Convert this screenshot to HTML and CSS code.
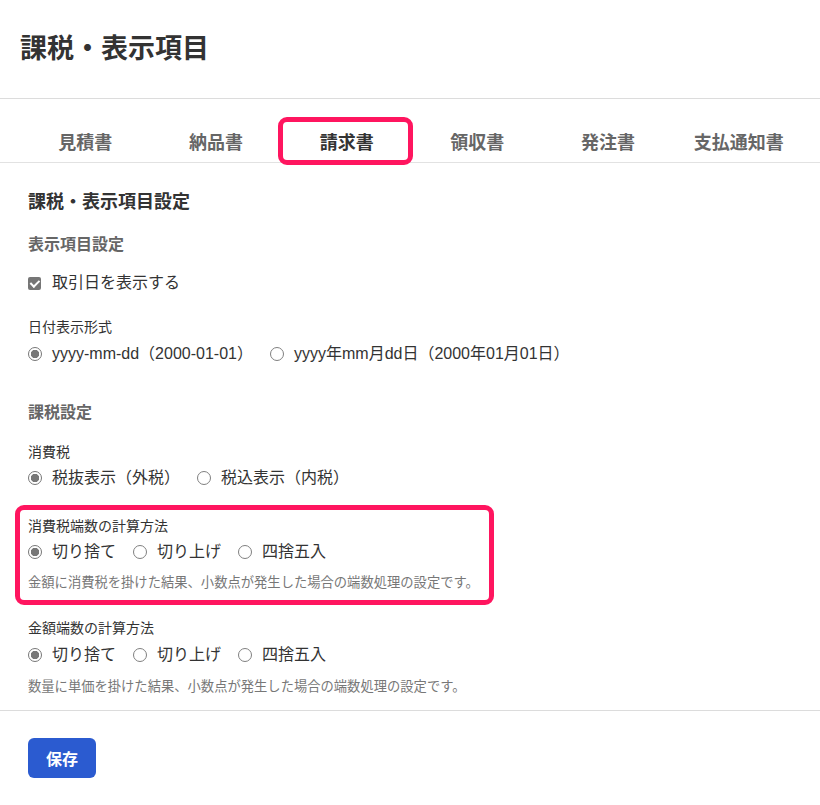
FILE: index.html
```html
<!DOCTYPE html>
<html lang="ja">
<head>
<meta charset="utf-8">
<title>課税・表示項目</title>
<link rel="stylesheet" href="styles.css">
</head>
<body>
<header class="page-header">
  <h1 class="page-title">課税・表示項目</h1>
</header>
<nav class="tabs">
  <div class="tab">見積書</div>
  <div class="tab">納品書</div>
  <div class="tab active">請求書</div>
  <div class="tab">領収書</div>
  <div class="tab">発注書</div>
  <div class="tab">支払通知書</div>
</nav>
<main class="content">
  <h2 class="section-title">課税・表示項目設定</h2>

  <h3 class="group-title">表示項目設定</h3>
  <label class="check-row"><input type="checkbox" checked>取引日を表示する</label>

  <div class="field field-date">
    <div class="field-label">日付表示形式</div>
    <div class="options">
      <label class="option"><input type="radio" name="date" checked>yyyy-mm-dd（2000-01-01）</label>
      <label class="option"><input type="radio" name="date">yyyy年mm月dd日（2000年01月01日）</label>
    </div>
  </div>

  <h3 class="group-title group-tax">課税設定</h3>

  <div class="field field-tax">
    <div class="field-label">消費税</div>
    <div class="options">
      <label class="option"><input type="radio" name="tax" checked>税抜表示（外税）</label>
      <label class="option"><input type="radio" name="tax">税込表示（内税）</label>
    </div>
  </div>

  <div class="field field-rounding annotated">
    <div class="field-label">消費税端数の計算方法</div>
    <div class="options">
      <label class="option"><input type="radio" name="taxround" checked>切り捨て</label>
      <label class="option"><input type="radio" name="taxround">切り上げ</label>
      <label class="option"><input type="radio" name="taxround">四捨五入</label>
    </div>
    <p class="desc">金額に消費税を掛けた結果、小数点が発生した場合の端数処理の設定です。</p>
  </div>

  <div class="field field-amount">
    <div class="field-label">金額端数の計算方法</div>
    <div class="options">
      <label class="option"><input type="radio" name="amountround" checked>切り捨て</label>
      <label class="option"><input type="radio" name="amountround">切り上げ</label>
      <label class="option"><input type="radio" name="amountround">四捨五入</label>
    </div>
    <p class="desc">数量に単価を掛けた結果、小数点が発生した場合の端数処理の設定です。</p>
  </div>
</main>
<footer class="footer">
  <button class="btn-save" type="button">保存</button>
</footer>
</body>
</html>
```

FILE: styles.css
```css
* {
  box-sizing: border-box;
}

body {
  margin: 0;
  background: #ffffff;
  color: #333333;
  font-family: "Liberation Sans", "Noto Sans CJK JP", sans-serif;
}

.page-header {
  height: 99px;
  display: flex;
  align-items: center;
  padding: 0 20px;
  border-bottom: 1px solid #dcdcdc;
}

.page-title {
  margin: 0;
  font-size: 27px;
  line-height: 1;
  font-weight: 700;
  color: #333333;
}

.tabs {
  display: grid;
  grid-template-columns: repeat(6, 1fr);
  padding: 19px 16px 0 20px;
  border-bottom: 1px solid #e2e2e2;
}

.tab {
  position: relative;
  height: 44px;
  display: flex;
  align-items: flex-end;
  justify-content: center;
  padding-bottom: 10px;
  font-size: 18px;
  line-height: 18px;
  font-weight: 700;
  color: #666666;
}

.tab.active {
  color: #333333;
}

.tab.active::after {
  content: "";
  position: absolute;
  top: -1px;
  left: -3px;
  right: -1px;
  bottom: -3px;
  border: 5px solid #ff155f;
  border-radius: 9px;
}

.content {
  padding: 0 28px 13px;
}

.section-title {
  margin: 27px 0 0;
  font-size: 18px;
  line-height: 24px;
  font-weight: 700;
  color: #333333;
}

.group-title {
  margin: 20px 0 0;
  font-size: 16px;
  line-height: 22px;
  font-weight: 700;
  color: #666666;
}

.group-tax {
  margin-top: 36px;
}

.check-row {
  margin-top: 15px;
  height: 24px;
  display: flex;
  align-items: center;
  gap: 11px;
  font-size: 16px;
  line-height: 24px;
  color: #333333;
}

input[type="checkbox"],
input[type="radio"] {
  appearance: none;
  -webkit-appearance: none;
  margin: 0;
  flex: none;
  background: #ffffff;
}

input[type="radio"] {
  width: 14px;
  height: 14px;
  border: 1.5px solid #808080;
  border-radius: 50%;
}

input[type="radio"]:checked {
  border: 1.5px solid #777777;
  background: radial-gradient(circle, #777777 0, #777777 3.9px, #ffffff 4.5px);
}

input[type="checkbox"] {
  width: 13px;
  height: 13px;
  border-radius: 2px;
  background: #767676;
  position: relative;
}

input[type="checkbox"]:checked::after {
  content: "";
  position: absolute;
  left: 4.3px;
  top: 1.5px;
  width: 3.5px;
  height: 7px;
  border: solid #ffffff;
  border-width: 0 2px 2px 0;
  transform: rotate(45deg);
}

.field-label {
  font-size: 14px;
  line-height: 20px;
  color: #333333;
}

.options {
  display: flex;
  gap: 17px;
  margin-top: 4px;
  height: 24px;
}

.option {
  display: flex;
  align-items: center;
  gap: 10px;
  font-size: 16px;
  line-height: 24px;
  color: #333333;
  white-space: nowrap;
}

.desc {
  margin: 9px 0 0;
  font-size: 13.3px;
  line-height: 20px;
  color: #777777;
  white-space: nowrap;
}

.field-date {
  margin-top: 22px;
}

.field-date .options {
  margin-top: 5px;
}

.field-tax {
  margin-top: 18px;
}

.field-rounding {
  margin-top: 26px;
}

.field-amount {
  margin-top: 25px;
}

.field-amount .options {
  margin-top: 5px;
}

.field-amount .desc {
  margin-top: 10px;
}

.annotated {
  position: relative;
  width: 452px;
}

.annotated::after {
  content: "";
  position: absolute;
  top: -11px;
  bottom: -12px;
  left: -13px;
  right: -14px;
  border: 5px solid #ff155f;
  border-radius: 9px;
  pointer-events: none;
}

.footer {
  border-top: 1px solid #dcdcdc;
  padding: 27px 28px 0;
}

.btn-save {
  width: 68px;
  height: 40px;
  border: none;
  border-radius: 6px;
  background: #2b5bd0;
  color: #ffffff;
  font-family: "Liberation Sans", "Noto Sans CJK JP", sans-serif;
  font-size: 16px;
  font-weight: 700;
  padding: 0;
}
```
